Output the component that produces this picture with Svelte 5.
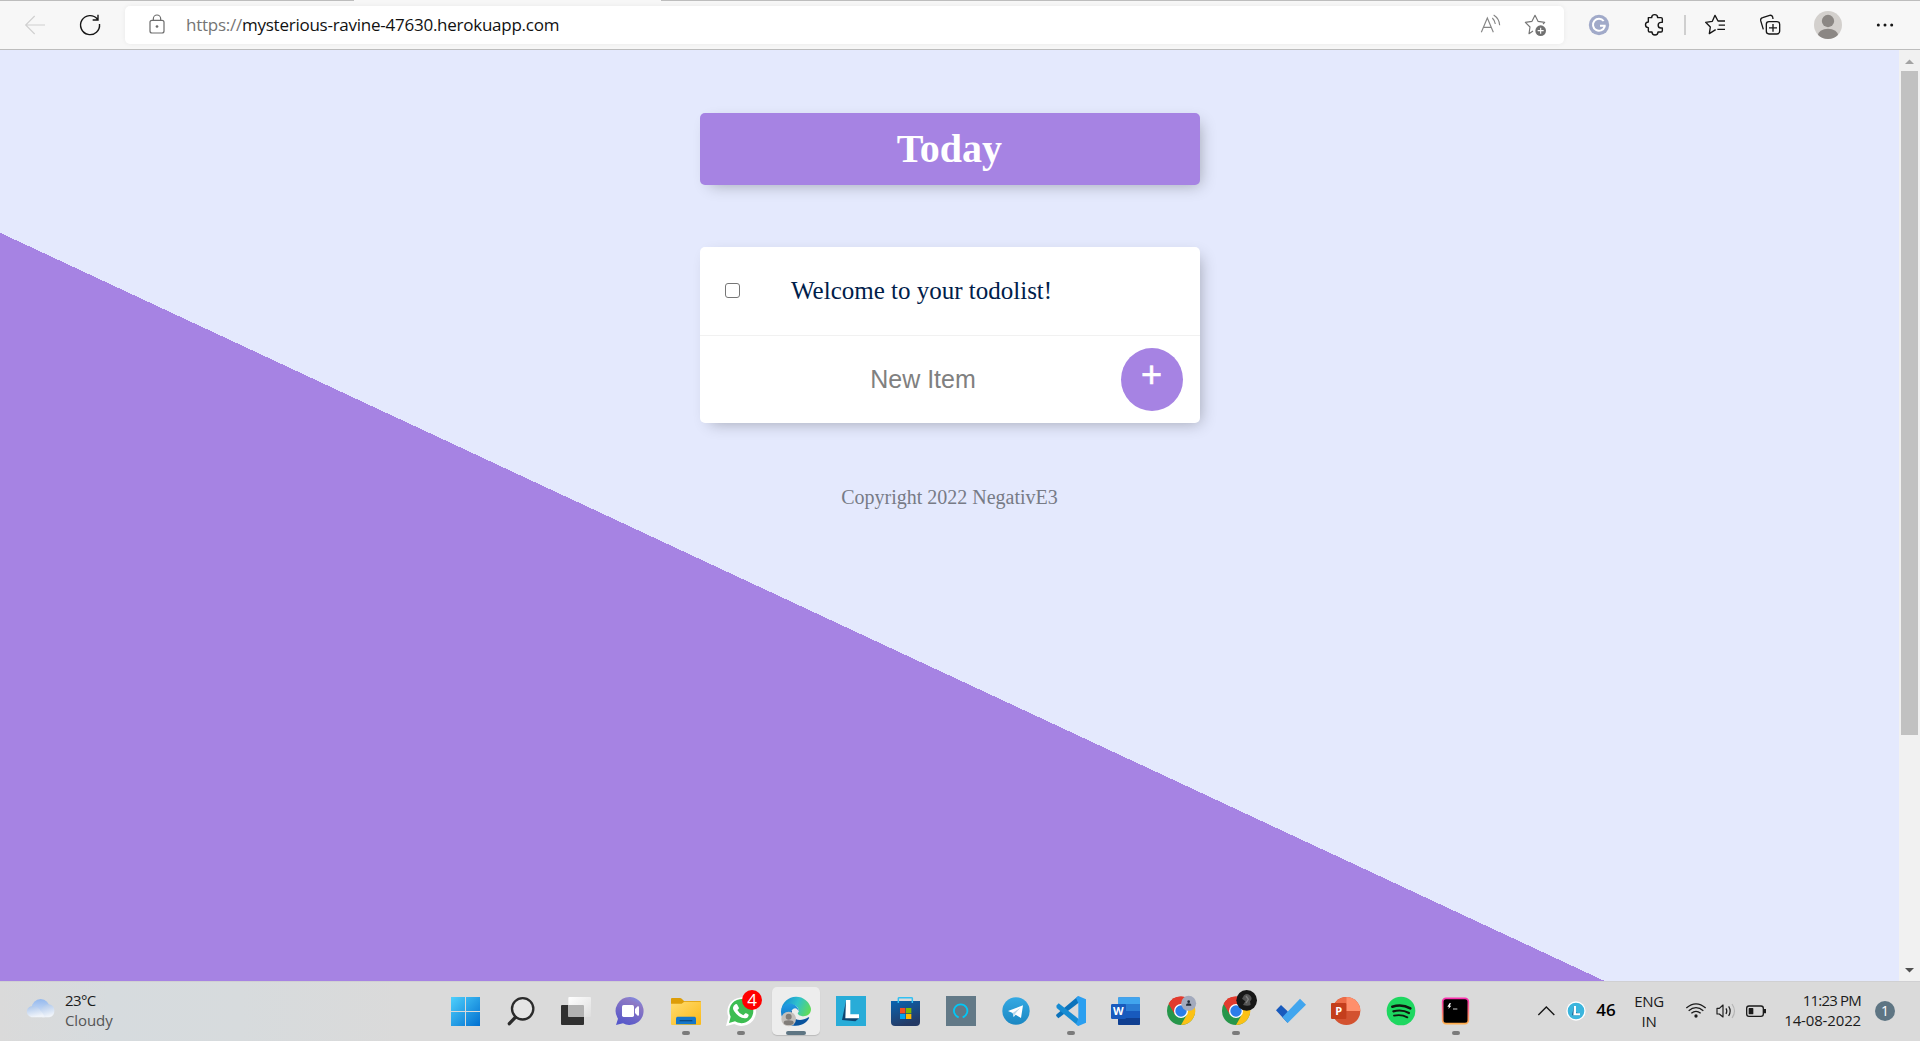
<script>
  let items = $state(['Welcome to your todolist!']);
  let draft = $state('');

  function addItem(event) {
    event.preventDefault();
    if (draft.trim()) items.push(draft.trim());
    draft = '';
  }
</script>

{#snippet chrome()}
  <circle cx="84" cy="90" r="42" fill="#26964a" />
  <path d="M84 90 L47 69 A42 42 0 0 1 121 69 Z" fill="#e23b2e" />
  <path d="M84 69 H121 A42 42 0 0 1 84 132 L102 100 Z" fill="#fbc116" />
  <path d="M47 69 L66 101 L84 90 L84 69 L121 69 A42 42 0 0 0 47 69Z" fill="#e23b2e" />
  <circle cx="84" cy="90" r="21" fill="#fff" />
  <circle cx="84" cy="90" r="17" fill="#2b7de9" />
{/snippet}

<div class="screen">
  <header class="toolbar">
    <span class="cell back">
      <svg width="30" height="30" viewBox="60 27 90 90" fill="none" stroke="#d0d0d0" stroke-width="3.4"><path d="M135 72H77M104 45L77 72L104 99" /></svg>
    </span>
    <span class="cell reload">
      <svg width="30" height="30" viewBox="225 30 90 90" fill="none" stroke="#161616" stroke-width="4.2"><path d="M292 57A28.500 28.500 0 1 0 298.500 72M294 44V60H278" /></svg>
    </span>
    <div class="address">
      <span class="cell lock">
        <svg width="24" height="30" viewBox="436 30 72 90" fill="none" stroke="#6c6c6c" stroke-width="3.6"><rect x="451" y="61" width="42" height="38" rx="6" /><path d="M461 61V56A11 11 0 0 1 483 56V61" /><circle cx="472" cy="79.500" r="4" fill="#6c6c6c" stroke="none" /></svg>
      </span>
      <span class="url"><span class="scheme">https://</span><span class="host">mysterious-ravine-47630.herokuapp.com</span></span>
      <span class="cell aloud">
        <svg width="30" height="30" viewBox="105 30 90 90" fill="none" stroke="#858585" stroke-width="3.400"><path d="M124 97L142 54L160 97M130 82H154M157 54Q165 62 166 72M161 45Q178 56 179 76" /></svg>
      </span>
      <span class="cell fav-add">
        <svg width="30" height="30" viewBox="240 30 90 90" fill="none" stroke="#757575" stroke-width="3.400" stroke-linejoin="round"><path d="M279 93L267 101L270 81L256 67L276 64L285 46L294 64L314 67L309 72" /><circle cx="302" cy="92" r="16" fill="#707070" stroke="none" /><path d="M302 83V101M293 92H311" stroke="#fff" /></svg>
      </span>
    </div>
    <span class="cell grammar">
      <svg width="30" height="30" viewBox="432 30 90 90" fill="none"><circle cx="477" cy="75" r="30.500" fill="#a1aac9" /><path d="M491 63A18 18 0 1 0 494 80V77H480" stroke="#fff" stroke-width="6" /></svg>
    </span>
    <span class="cell puzzle">
      <svg width="30" height="30" viewBox="597 30 90 90" fill="none" stroke="#161616" stroke-width="4.2" stroke-linejoin="round"><path d="M625 53H635A9 9 0 1 1 653 53H663Q667 53 667 57V67H663A7.500 7.500 0 0 0 663 84H667V92Q667 96 663 96H654A9 9 0 0 1 636 96H629Q625 96 625 92V83A8.500 8.500 0 0 1 625 66Z" /></svg>
    </span>
    <span class="cell split"><i></i></span>
    <span class="cell favs">
      <svg width="30" height="30" viewBox="780 30 90 90" fill="none" stroke="#161616" stroke-width="4" stroke-linejoin="round"><path d="M827 89L808 101L811 81L797 67L817 64L825 46L834 63H855M836 75.500H855M832 88H855" /></svg>
    </span>
    <span class="cell collect">
      <svg width="30" height="30" viewBox="945 30 90 90" fill="none" stroke="#161616" stroke-width="4" stroke-linejoin="round"><rect x="979" y="65" width="40" height="37" rx="8" /><path d="M999 72V95M987 83.500H1011M970 88L962 62Q961 55 968 53L989 46Q996 45 998 51L999 57" /></svg>
    </span>
    <span class="cell avatar">
      <svg width="30" height="30" viewBox="1119 30 90 90"><defs><clipPath id="face"><circle cx="1164" cy="75" r="42" /></clipPath></defs><circle cx="1164" cy="75" r="42" fill="#d3d0cd" /><circle cx="1164" cy="63" r="18.500" fill="#8b8784" /><ellipse cx="1164" cy="108" rx="31" ry="22" fill="#8b8784" clip-path="url(#face)" /></svg>
    </span>
    <span class="cell dots">
      <svg width="30" height="30" viewBox="1290 30 90 90" fill="#161616"><circle cx="1315" cy="75" r="4.500" /><circle cx="1335" cy="75" r="4.500" /><circle cx="1355" cy="75" r="4.500" /></svg>
    </span>
  </header>

  <div class="viewport">
    <div class="page">
      <div class="box heading"><h1>Today</h1></div>
      <div class="box list">
        {#each items as item}
          <label class="item"><input class="tick" type="checkbox" /><p>{item}</p></label>
        {/each}
        <form class="new" onsubmit={addItem}>
          <input class="draft" type="text" placeholder="New Item" autocomplete="off" bind:value={draft} />
          <button type="submit">+</button>
        </form>
      </div>
      <footer>Copyright 2022 NegativE3</footer>
    </div>
    <div class="scrollbar">
      <svg width="21" height="21" viewBox="0 0 21 21"><path d="M6 14L10.500 9.500L15 14Z" fill="#a3a3a3" /></svg>
      <div class="thumb"></div>
      <svg class="down" width="21" height="21" viewBox="0 0 21 21"><path d="M6 8L10.500 12.500L15 8Z" fill="#505050" /></svg>
    </div>
  </div>

  <div class="taskbar">
    <div class="weather">
      <svg width="32" height="22" viewBox="75 86 96 66">
        <defs>
          <linearGradient id="cl1" x1="0" y1="0" x2="0" y2="1"><stop offset="0" stop-color="#93b8ee" /><stop offset="1" stop-color="#dfe9f8" /></linearGradient>
          <linearGradient id="cl2" x1="0" y1="0" x2=".3" y2="1"><stop offset="0" stop-color="#a9c4ea" /><stop offset="1" stop-color="#f0f4fa" /></linearGradient>
        </defs>
        <circle cx="122" cy="116" r="27" fill="url(#cl1)" />
        <path d="M127 144Q118 134 124 120Q132 104 147 105A20 20 0 0 1 148 144Z" fill="url(#cl2)" />
        <path d="M96 144A17 17 0 1 1 103 111Q120 113 134 144Z" fill="url(#cl2)" />
      </svg>
      <div class="forecast"><span>23°C</span><span class="dim">Cloudy</span></div>
    </div>

    <nav class="apps">
      <span class="app">
        <svg viewBox="24 18 165 180">
          <defs><linearGradient id="win" x1="63" y1="66" x2="150" y2="153" gradientUnits="userSpaceOnUse"><stop offset="0" stop-color="#4fd0fc" /><stop offset="1" stop-color="#006fd0" /></linearGradient></defs>
          <path d="M63 66H105V108H63ZM108 66H150V108H108ZM63 111H105V153H63ZM108 111H150V153H108Z" fill="url(#win)" />
        </svg>
      </span>
      <span class="app">
        <svg viewBox="189 18 165 180" fill="none" stroke="#2b2b2b"><circle cx="278" cy="101.500" r="32" fill="#e5e5e5" stroke-width="7" /><path d="M238 146L256 127" stroke-width="10" stroke-linecap="round" /></svg>
      </span>
      <span class="app">
        <svg viewBox="354 18 165 180">
          <defs><linearGradient id="tv" x1="0" y1="0" x2="1" y2="1"><stop offset="0" stop-color="#fff" /><stop offset="1" stop-color="#dedede" /></linearGradient></defs>
          <rect x="393" y="90" width="69" height="60" rx="3" fill="#303030" /><rect x="415" y="66" width="68" height="60" rx="3" fill="url(#tv)" /><path d="M415 90H459Q462 90 462 93V126H418Q415 126 415 123Z" fill="#b2b2b2" />
        </svg>
      </span>
      <span class="app">
        <svg viewBox="519 18 165 180">
          <defs><linearGradient id="chat" x1=".8" y1="0" x2=".3" y2="1"><stop offset="0" stop-color="#7e8ee8" /><stop offset=".25" stop-color="#8c78c4" /><stop offset="1" stop-color="#5657ca" /></linearGradient></defs>
          <path d="M601 66A42 42 0 1 1 579 145L558 150L564 131A42 42 0 0 1 601 66Z" fill="url(#chat)" /><rect x="576" y="90" width="36" height="36" rx="5" fill="#fff" /><path d="M615 102L623 94Q627 93 627 97V119Q627 123 623 122L615 114Z" fill="#fff" />
        </svg>
      </span>
      <span class="app">
        <svg viewBox="684 18 165 180">
          <defs><linearGradient id="fold" x1="0" y1="0" x2="1" y2="1"><stop offset="0" stop-color="#ffdc70" /><stop offset="1" stop-color="#fbb916" /></linearGradient></defs>
          <path d="M723 95V72Q723 69 726 69H750Q753 69 756 72L762 78H810Q813 78 813 81V95Z" fill="#dd9d08" /><path d="M723 86H755L763 80H813V147Q813 150 810 150H726Q723 150 723 147Z" fill="url(#fold)" />
          <path d="M738 148V130Q738 125 743 125H793Q798 125 798 130V148Z" fill="#1577c9" /><path d="M749 137H787" stroke="#0a4b86" stroke-width="4" />
        </svg><i class="running"></i>
      </span>
      <span class="app">
        <svg viewBox="849 18 165 180">
          <path d="M888 153L895 126A43 43 0 1 1 913 147Z" fill="#fff" /><path d="M897 144L902 125A36 36 0 1 1 915 139Z" fill="#3dbd52" />
          <path d="M916 88Q920 86 922 89L927 99Q927 102 922 105Q928 117 940 121L946 115Q949 114 956 119Q957 123 952 128Q941 134 926 123Q908 108 909 98Q910 92 916 88Z" fill="#fff" />
        </svg><b class="count">4</b><i class="running"></i>
      </span>
      <span class="app active">
        <svg viewBox="24 0 165 180">
          <defs>
            <linearGradient id="eg1" x1="0" y1=".3" x2="1" y2=".6"><stop offset="0" stop-color="#138bd5" /><stop offset=".5" stop-color="#2fc1cc" /><stop offset="1" stop-color="#60dc58" /></linearGradient>
            <linearGradient id="eg2" x1="0" y1="0" x2="0" y2="1"><stop offset="0" stop-color="#229be3" /><stop offset="1" stop-color="#0868bb" /></linearGradient>
          </defs>
          <path d="M64 86A45 44 0 0 1 153 84C153 108 126 109 116 101Q110 97 117 92C118 72 88 58 64 86Z" fill="url(#eg1)" />
          <path d="M63 91C64 67 94 61 109 76Q117 84 116 93Q112 79 100 83C78 100 95 126 115 132C80 142 62 113 63 91Z" fill="url(#eg2)" />
          <path d="M96 88C92 116 119 125 145 109Q149 108 147 112C136 132 112 138 98 131C82 122 84 99 96 88Z" fill="#09549e" />
          <circle cx="86" cy="114" r="22" fill="#c4c0bc" /><circle cx="86" cy="107" r="9" fill="#817d79" /><ellipse cx="86" cy="125" rx="15" ry="7" fill="#817d79" />
        </svg><i class="running wide"></i>
      </span>
      <span class="app">
        <svg viewBox="99 18 165 180"><rect x="138" y="63" width="90" height="90" fill="#28acd8" /><path d="M168 78L156 135L196 139L207 130L176 118Z" fill="#0d4571" /><path d="M168 75H181V118H207V130H166Z" fill="#fff" /></svg>
      </span>
      <span class="app">
        <svg viewBox="264 18 165 180">
          <defs><linearGradient id="bag" x1="0" y1="0" x2=".4" y2="1"><stop offset="0" stop-color="#0963b1" /><stop offset="1" stop-color="#243a65" /></linearGradient></defs>
          <path d="M303 78H390V141Q390 153 378 153H315Q303 153 303 141Z" fill="url(#bag)" /><path d="M325 84V70Q325 68 328 68H364Q367 68 367 70V84" fill="none" stroke="#32c0f2" stroke-width="4.500" />
          <path d="M330 99H346V115H330Z" fill="#f25022" /><path d="M348 99H364V115H348Z" fill="#7fba00" /><path d="M330 117H346V132H330Z" fill="#00a4ef" /><path d="M348 117H364V132H348Z" fill="#ffb900" />
        </svg>
      </span>
      <span class="app">
        <svg viewBox="429 18 165 180"><rect x="468" y="63" width="90" height="90" fill="#627987" /><path d="M506 127A20 20 0 1 1 518 127" fill="none" stroke="#00c8f8" stroke-width="5.500" /></svg>
      </span>
      <span class="app">
        <svg viewBox="594 18 165 180">
          <defs><linearGradient id="tg" x1="0" y1="0" x2="0" y2="1"><stop offset="0" stop-color="#34a9e3" /><stop offset="1" stop-color="#1b87c2" /></linearGradient></defs>
          <circle cx="678" cy="108" r="41" fill="url(#tg)" /><path d="M654 108L699 91L693 129L677 119L671 126L668 114Z" fill="#fff" /><path d="M668 114L691 98L675 117L671 126Z" fill="#b9d8e9" />
        </svg>
      </span>
      <span class="app">
        <svg viewBox="759 18 165 180"><path d="M798 122L805 130L865 84V63L800 118Z" fill="#0b72bb" /><path d="M799 92L806 85L865 131V153L800 99Z" fill="#168bd2" /><path d="M865 63L888 73V143L865 153L858 147L865 131V85L858 69Z" fill="#2b9ff0" /></svg><i class="running"></i>
      </span>
      <span class="app">
        <svg viewBox="924 18 165 180"><rect x="984" y="67" width="66" height="83" rx="4" fill="#2b7cd3" /><path d="M984 87V71Q984 67 988 67H1046Q1050 67 1050 71V87Z" fill="#41a5ee" /><path d="M984 108H1050V129H984Z" fill="#185abd" /><path d="M984 129H1050V146Q1050 150 1046 150H988Q984 150 984 146Z" fill="#103f91" /><rect x="963" y="87" width="45" height="45" rx="4" fill="#185abd" /><text x="985" y="119" class="letter">W</text></svg>
      </span>
      <span class="app"><svg viewBox="0 0 165 180"><g>{@render chrome()}</g><circle cx="107" cy="67" r="22.500" fill="#a3aabd" /><circle cx="107" cy="62" r="4" fill="#202a38" /><path d="M99 74Q99 67 107 67Q115 67 115 74Z" fill="#202a38" /></svg></span>
      <span class="app"><svg viewBox="0 0 165 180"><g>{@render chrome()}</g><ellipse cx="116" cy="58" rx="31" ry="31" fill="#171717" /><path d="M108 43Q118 34 127 44Q135 53 126 61L128 72Q119 77 105 72L112 61L102 53Z" fill="#555" /><path d="M114 45L121 55L114 66" stroke="#818181" stroke-width="4" fill="none" /></svg><i class="running"></i></span>
      <span class="app">
        <svg viewBox="339 18 165 180"><path d="M378 106L393 90L413 109V144Z" fill="#185abd" /><path d="M397 127L450 71L468 89L413 144Z" fill="#41a5ee" /></svg>
      </span>
      <span class="app">
        <svg viewBox="504 18 165 180"><circle cx="589" cy="108" r="42" fill="#d35230" /><path d="M589 66A42 42 0 0 0 547 108H589Z" fill="#ed6c47" /><path d="M589 66A42 42 0 0 1 631 108H589Z" fill="#ff8f6b" /><rect x="543" y="84" width="46" height="48" rx="3" fill="#c43e1c" /><text x="566" y="119" class="letter">P</text></svg>
      </span>
      <span class="app">
        <svg viewBox="669 18 165 180" fill="none" stroke="#101810" stroke-linecap="round"><circle cx="753" cy="108" r="43" fill="#1ed760" stroke="none" /><path d="M727 95Q756 86 781 100" stroke-width="8" /><path d="M730 109Q756 102 777 114" stroke-width="6.500" /><path d="M732 122Q754 117 772 127" stroke-width="5.500" /></svg>
      </span>
      <span class="app">
        <svg viewBox="834 18 165 180">
          <defs><linearGradient id="term" x1="0" y1="0" x2="0" y2="1"><stop offset="0" stop-color="#fb2fae" /><stop offset="1" stop-color="#ffae4d" /></linearGradient></defs>
          <rect x="878" y="70" width="77" height="76" rx="10" stroke="url(#term)" stroke-width="5" fill="#000" /><path d="M899 84L892 95H897L895 102L904 92H899L903 85Z" fill="#fff" /><path d="M909 102H922" stroke="#ccc" stroke-width="3" />
        </svg><i class="running"></i>
      </span>
    </nav>

    <div class="tray">
      <span class="cell chev"><svg width="18" height="12" viewBox="80 134 54 36" fill="none" stroke="#161616" stroke-width="4"><path d="M84 164L108 140L132 164" /></svg></span>
      <span class="cell chev">
        <svg width="20" height="20" viewBox="168 123 60 60"><circle cx="198" cy="153" r="29" fill="#fff" /><circle cx="198" cy="153" r="25" fill="#3bb5dd" /><path d="M192 139L186 166H209V161L196 156Z" fill="#155d8c" /><path d="M192 138H198V160H210V166H190Z" fill="#fff" /></svg>
      </span>
      <span class="cell chev temp">46</span>
      <div class="lang"><span>ENG</span><span>IN</span></div>
      <span class="cell wifi">
        <svg width="24" height="24" viewBox="522 117 72 72" fill="none" stroke="#1b1b1b" stroke-width="4"><path d="M529 144Q558 119 587 144M536 152Q558 134 580 152M544 160Q558 148 572 160" /><circle cx="558" cy="168" r="5" fill="#1b1b1b" stroke="none" /></svg>
      </span>
      <span class="cell sound">
        <svg width="22" height="24" viewBox="614 117 66 72" fill="none" stroke="#1b1b1b" stroke-width="3.500" stroke-linejoin="round"><path d="M620 145H627L638 135V171L627 162H620ZM647 145Q652 153 647 162M655 139Q664 153 655 168" /><path d="M665 132Q680 153 665 174" stroke="#b5b5b5" /></svg>
      </span>
      <span class="cell wifi">
        <svg width="22" height="24" viewBox="705 117 66 72" fill="none" stroke="#1b1b1b" stroke-width="4"><rect x="710" y="138" width="50" height="31" rx="7" /><rect x="716" y="144" width="14" height="19" rx="2" fill="#1b1b1b" stroke="none" /><path d="M765 147V160" stroke-width="6" /></svg>
      </span>
      <div class="clock"><span class="time">11:23 PM</span><span class="date">14-08-2022</span></div>
      <span class="cell alerts"><b>1</b></span>
    </div>
  </div>
</div>

<style>
  :global(body) { margin: 0; overflow: hidden; }
  * { box-sizing: border-box; }
  svg { display: block; flex: none; }
  .screen { width: 1920px; height: 1041px; overflow: hidden; display: flex; flex-direction: column; font-family: "Open Sans", "Noto Sans", sans-serif; }
  .cell { display: flex; align-items: center; justify-content: center; flex: none; }

  .toolbar { height: 50px; flex: none; display: flex; align-items: center; background: #f7f7f7; border-bottom: 1px solid #bdbdbd; background-image: linear-gradient(90deg, #bdbdbd 354px, #f7f7f7 354px, #f7f7f7 661px, #bdbdbd 661px); background-size: 100% 1px; background-repeat: no-repeat; }
  .back { width: 70px; }
  .reload { width: 40px; }
  .address { width: 1439px; height: 38px; margin-left: 15px; background: #fff; border-radius: 5px; display: flex; align-items: center; box-shadow: 0 0 5px rgba(0, 0, 0, .06); flex: none; }
  .lock { width: 24px; margin-left: 20px; }
  .url { margin-left: 17px; flex: 1; font-size: 17px; line-height: 24px; white-space: nowrap; color: #111; letter-spacing: -.25px; }
  .scheme { color: #757575; }
  .aloud { width: 45px; }
  .fav-add { width: 45px; margin-right: 7px; }
  .grammar { width: 70px; }
  .puzzle { width: 40px; }
  .split { width: 22px; }
  .split i { width: 2px; height: 20px; background: #cfcfcf; }
  .favs { width: 38px; }
  .collect { width: 72px; }
  .avatar { width: 44px; }
  .dots { width: 70px; }

  .viewport { height: 931px; flex: none; display: flex; overflow: hidden; }
  .page { width: 1899px; height: 1251px; padding-top: 63px; background: linear-gradient(25deg, #a683e3 50%, #e4e9fd 50%); font-family: "Liberation Serif", serif; display: flex; flex-direction: column; align-items: center; flex: none; }
  .box { width: 500px; background: #fff; border-radius: 5px; box-shadow: 5px 5px 15px -5px rgba(0, 0, 0, .3); flex: none; }
  .heading { height: 72px; background: #a683e3; display: flex; align-items: center; justify-content: center; }
  h1 { margin: 0; font-size: 40px; line-height: 46px; color: #fff; }
  .list { margin-top: 62px; height: 176px; overflow: hidden; }
  .item { height: 89px; display: flex; align-items: center; border-bottom: 1px solid #f1f1f1; padding: 0 0 1px 25px; }
  .tick { appearance: none; width: 15px; height: 15px; margin: 0; border: 1px solid #767676; border-radius: 3px; background: #fff; }
  .tick:checked { background: #a683e3; }
  p { margin: 0 0 0 51.5px; font-size: 25px; line-height: 29px; color: #00204a; }
  .new { height: 87px; display: flex; align-items: center; }
  .draft { width: 395px; margin-left: 26px; height: 60px; border: 0; padding: 0; background: transparent; outline: none; text-align: center; font: 25px "Liberation Sans", sans-serif; color: #00204a; }
  .draft::placeholder { color: #808080; opacity: 1; }
  button { width: 62px; height: 63px; border: 0; border-radius: 50%; background: #a683e3; color: #fff; padding: 0 0 10px; font: 36px/1 "Liberation Sans", sans-serif; -webkit-text-stroke: .6px #fff; }
  footer { margin-top: 63px; font-size: 20px; line-height: 22px; color: #777b86; }

  .scrollbar { width: 21px; height: 931px; background: #f1f1f1; display: flex; flex-direction: column; align-items: center; flex: none; }
  .thumb { width: 17px; height: 664px; background: #c1c1c1; }
  .down { margin-top: auto; }

  .taskbar { height: 60px; flex: none; display: flex; align-items: stretch; background: linear-gradient(90deg, #dadada 0, #d6dbde 110px, #d7dbdd 240px, #dadada 400px); border-top: 1px solid #d0d0d2; }
  .weather { width: 438px; padding: 0 0 3px 25px; display: flex; align-items: center; flex: none; }
  .weather svg { margin-top: -2px; }
  .forecast { margin-left: 8px; display: flex; flex-direction: column; font-size: 15px; line-height: 20px; color: #1b1b1b; letter-spacing: -.6px; }
  .dim { color: #555; letter-spacing: -.1px; }
  .apps { display: flex; flex: none; margin-top: -1px; }
  .app { width: 55px; height: 60px; position: relative; }
  .app svg { width: 55px; height: 60px; position: relative; }
  .active::before { content: ""; position: absolute; left: 4px; top: 6px; width: 48px; height: 48px; border-radius: 5px; background: #ededed; box-shadow: 0 1px 1px rgba(0, 0, 0, .15); }
  .running { position: absolute; left: 24px; top: 50px; width: 8px; height: 4px; border-radius: 2px; background: #7b7b7b; }
  .wide { left: 18px; width: 20px; background: #5e7583; }
  .count { position: absolute; left: 29px; top: 9px; width: 20px; height: 20px; border-radius: 50%; background: #f00; color: #fff; font: 17px/20px "Open Sans", sans-serif; text-align: center; }
  .letter { font: bold 33px "Open Sans", sans-serif; fill: #fff; text-anchor: middle; }

  .tray { margin-left: 48px; margin-top: -1px; display: flex; align-items: center; color: #1b1b1b; font-size: 15px; line-height: 20px; }
  .chev { width: 30px; }
  .temp { font-size: 17px; font-weight: 600; color: #000; padding-bottom: 2px; }
  .lang { width: 56px; padding-bottom: 1px; display: flex; flex-direction: column; align-items: center; letter-spacing: -.3px; }
  .wifi { width: 38px; }
  .sound { width: 22px; }
  .clock { width: 86px; padding-bottom: 2px; display: flex; flex-direction: column; align-items: flex-end; white-space: nowrap; }
  .time { letter-spacing: -.8px; }
  .date { letter-spacing: -.15px; }
  .alerts { width: 48px; }
  .alerts b { width: 20px; height: 20px; border-radius: 50%; background: #5e7583; color: #fff; font-size: 14px; font-weight: 400; text-align: center; }
</style>
